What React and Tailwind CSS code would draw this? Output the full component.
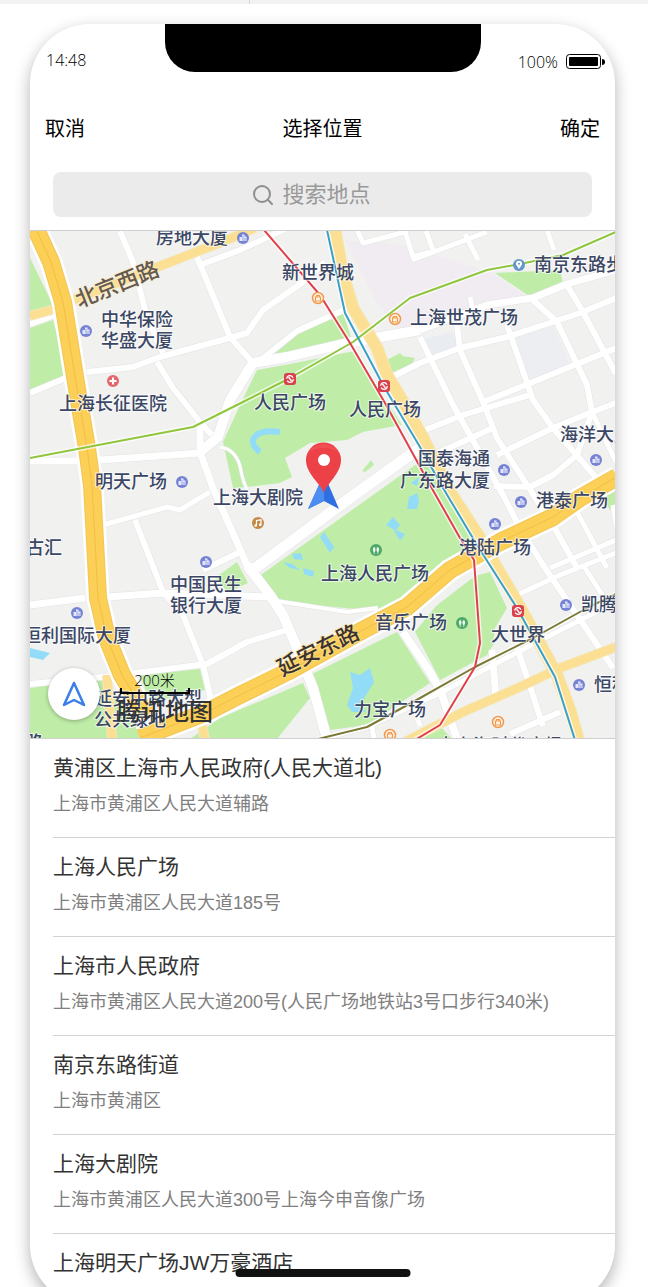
import { Search } from 'lucide-react'

const PLACES = [
  { name: '黄浦区上海市人民政府(人民大道北)', address: '上海市黄浦区人民大道辅路' },
  { name: '上海人民广场', address: '上海市黄浦区人民大道185号' },
  { name: '上海市人民政府', address: '上海市黄浦区人民大道200号(人民广场地铁站3号口步行340米)' },
  { name: '南京东路街道', address: '上海市黄浦区' },
  { name: '上海大剧院', address: '上海市黄浦区人民大道300号上海今申音像广场' },
  { name: '上海明天广场JW万豪酒店', address: '上海市黄浦区南京西路399号' },
]

// Map geometry, viewBox origin is 30,231
const GREENS = [
  '30,258 53,305 30,313',
  '30,328 53,320 58,338 65,378 30,391',
  '273,355 300,332 343,313 352,340',
  '257,370 290,364 354,351 402,425 373,430 363,432 347,440 310,443 285,458 292,477 280,483 247,487 233,488 223,442 240,405',
  '383,362 400,353 403,356 415,358 410,367 393,375',
  '495,273 560,270 563,283 532,298',
  '258,577 425,458 445,490 478,553 400,602 380,612 345,608 280,602',
  '436,606 475,576 490,572 507,608 495,628 493,645 487,655 440,680 415,632',
  '310,675 397,632 430,683 367,725 330,730',
  '220,718 303,683 310,698 277,739 190,739',
  '30,688 103,678 120,700 145,739 30,739',
  '140,675 200,669 205,690 150,702',
  '215,578 237,562 248,583 228,592',
  '602,497 616,490 616,506 610,510',
  '420,739 440,726 452,739',
]

const WATERS = [
  '30,648 50,653 43,660 30,657',
  '350,672 360,675 370,668 374,682 365,697 360,705 366,712 352,712 347,705 353,688',
  '386,525 393,517 400,525 396,530 405,534 400,541 394,530',
  '411,483 419,477 417,486',
  '409,497 417,493 419,501 417,509 407,509',
  '320,537 324,532 334,547 330,553',
  '292,554 301,553 303,560 294,559',
  '283,562 292,564 300,570 290,568',
  '303,568 314,571 313,577 304,574',
]

const STREETS = [
  { w: 6, d: 'M120 231L133 262L147 318L163 353' },
  { w: 6, d: 'M87 372L133 367L160 357L233 337L247 333L263 310L303 282L325 262' },
  { w: 6, d: 'M157 362L173 388L200 422L212 435' },
  { w: 6, d: 'M197 257L230 337L253 363' },
  { w: 6, d: 'M200 265L240 250L285 229' },
  { w: 6, d: 'M30 324L55 315M30 393L66 378' },
  { w: 10, d: 'M253 363L287 357L347 343L420 330' },
  { w: 7, d: 'M420 330L487 305L533 298L567 284L616 270' },
  { w: 6, d: 'M348 308L297 331L257 363' },
  { w: 10, d: 'M253 363L230 400L218 437L200 452' },
  { w: 7, d: 'M30 461L78 461L100 460L200 453' },
  { w: 7, d: 'M200 420L200 452' },
  { w: 7, d: 'M200 452L213 488L250 572' },
  { w: 10, d: 'M247 565L270 595L283 615L297 648L313 688L327 739' },
  { w: 5, d: 'M103 525L167 507L180 510L210 492' },
  { w: 6, d: 'M135 520L163 592L183 615L203 665L211 700' },
  { w: 6, d: 'M203 570L240 552' },
  { w: 11, d: 'M250 572L343 503L400 462L420 448' },
  { w: 6, d: 'M420 432L463 415L530 395' },
  { w: 6, d: 'M390 378L420 363L460 348L507 337L580 313L616 298' },
  { w: 6, d: 'M483 402L533 382L616 348' },
  { w: 6, d: 'M420 337L453 405L470 435L503 495L520 528L543 565L613 668' },
  { w: 6, d: 'M457 325L460 350L483 402L497 438L527 485L553 525L577 568' },
  { w: 6, d: 'M507 325L533 400L553 428L600 482' },
  { w: 6, d: 'M533 300L557 322L587 385L592 412L577 455L553 475L530 487L494 486' },
  { w: 6, d: 'M567 285L583 312L616 374' },
  { w: 6, d: 'M440 452L493 428M497 455L553 428L592 412L616 403' },
  { w: 5, d: 'M592 412L616 462' },
  { w: 5, d: 'M616 540L550 568M517 595L560 575L616 553M577 512L607 568M613 505L617 530M583 565L612 610' },
  { w: 5, d: 'M412 260L420 257L487 232M426 231L433 250M465 234L478 260M547 230L554 250M470 297L473 310' },
  { w: 5, d: 'M357 230L363 243L405 232M405 231L413 257L430 252' },
  { w: 4, d: 'M270 600L347 612L378 608' },
  { w: 3, d: 'M220 447Q235 449 240 466Q243 484 250 495' },
  { w: 8, d: 'M403 632L430 672L441 692L457 739' },
  { w: 6, d: 'M30 684L103 677L207 664L247 642L287 630' },
  { w: 7, d: 'M30 605L85 598M107 597L163 593L270 597' },
  { w: 7, d: 'M492 650L496 698' },
  { w: 6, d: 'M517 647L543 726M510 734L560 712' },
  { w: 5, d: 'M320 739L367 727L440 693L535 643L616 602M372 727L374 739M414 708L420 726' },
]

const AVENUES = [
  { w: 8, d: 'M30 316L55 309L73 300L160 266L227 240L255 228' },
  { w: 11, d: 'M335 230L343 275L353 308L377 348L387 375L405 405L423 438L450 492L480 538L500 573L517 602L537 638L557 675L570 710L579 742' },
  { w: 8, d: 'M616 647L560 668L520 687L463 712L405 742' },
  { w: 8, d: 'M107 675L112 739M200 715L205 739' },
]

const HIGHWAYS = [
  'M35 227L51 262L63 302L78 395L87 448L92 485L96 560L98 598L107 638L122 675L148 718',
  'M140 738L207 712L240 695L287 672L363 630L407 607L450 570L500 542L553 517L580 498L617 477',
]

const METRO = [
  { c: '#8fc63d', d: 'M30 458L193 427L237 405L290 378L353 342L410 298L487 270L520 264L563 255L616 232' },
  { c: '#3aa0c8', d: 'M327 230L345 313L383 385L420 447L443 488L477 545L517 608L555 677L575 740' },
  { c: '#7b7a35', d: 'M318 739L367 727L413 702L475 667L533 638L587 608L616 594' },
  { c: '#e0404a', d: 'M264 230L320 295L350 343L385 403L430 485L460 538L474 560L480 643L475 667L440 725L415 740' },
]

const LABELS = [
  { x: 192, y: 237, t: '房地大厦' },
  { x: 137, y: 319, t: '中华保险' },
  { x: 137, y: 340, t: '华盛大厦' },
  { x: 318, y: 272, t: '新世界城' },
  { x: 579, y: 264, t: '南京东路步' },
  { x: 464, y: 317, t: '上海世茂广场' },
  { x: 113, y: 403, t: '上海长征医院' },
  { x: 290, y: 402, t: '人民广场' },
  { x: 385, y: 409, t: '人民广场' },
  { x: 596, y: 434, t: '海洋大厦' },
  { x: 454, y: 458, t: '国泰海通' },
  { x: 445, y: 480, t: '广东路大厦' },
  { x: 131, y: 481, t: '明天广场' },
  { x: 258, y: 497, t: '上海大剧院' },
  { x: 572, y: 500, t: '港泰广场' },
  { x: 495, y: 547, t: '港陆广场' },
  { x: 44, y: 547, t: '古汇' },
  { x: 206, y: 584, t: '中国民生' },
  { x: 206, y: 605, t: '银行大厦' },
  { x: 375, y: 573, t: '上海人民广场' },
  { x: 411, y: 622, t: '音乐广场' },
  { x: 617, y: 604, t: '凯腾大厦' },
  { x: 518, y: 634, t: '大世界' },
  { x: 77, y: 635, t: '恒利国际大厦' },
  { x: 630, y: 684, t: '恒积大厦' },
  { x: 390, y: 709, t: '力宝广场' },
  { x: 148, y: 698, t: '延安中路大型' },
  { x: 130, y: 719, t: '公共绿地' },
  { x: 500, y: 745, t: '大上海时代广场' },
  { x: 34, y: 742, t: '路' },
]

const BUILDINGS = [[243, 238], [86, 331], [182, 482], [206, 562], [77, 613], [504, 470], [521, 502], [495, 524], [596, 460], [566, 605], [579, 685]]
const SHOPS = [[318, 298], [395, 319], [390, 735], [498, 722]]
const STATIONS = [[290, 379], [384, 386], [518, 611]]
const PARKS = [[376, 550], [462, 623]]

function CityMap() {
  return (
    <svg
      viewBox="30 231 585 507"
      preserveAspectRatio="xMidYMid slice"
      className="block h-full w-full font-['Noto_Sans_CJK_SC',sans-serif]"
      role="img"
      aria-label="地图"
    >
      <rect x="30" y="231" width="586" height="508" fill="#f1f1f0" />
      <polygon points="345,240 400,245 490,272 530,298 400,332 375,300" fill="#f1ecf1" />
      <polygon points="508,340 553,326 570,365 527,382" fill="#eceef1" />
      <polygon points="422,340 452,332 458,346 430,358" fill="#e9edf2" />

      {GREENS.map((p) => <polygon key={p} points={p} fill="#bfeda8" />)}
      <polygon points="362,471 371,460 374,465 365,472" fill="#bfeda8" />
      {WATERS.map((p) => <polygon key={p} points={p} fill="#93dcf8" />)}
      <path d="M280 432Q257 429 253 440Q252 446 260 452" fill="none" stroke="#93dcf8" strokeWidth="6" />

      {/* Roads: casing first, then fill */}
      <g fill="none" strokeLinejoin="round">
        {STREETS.map((s) => <path key={s.d} d={s.d} stroke="#e2e3e4" strokeWidth={s.w + 1} />)}
        {STREETS.map((s) => <path key={s.d} d={s.d} stroke="#ffffff" strokeWidth={s.w} />)}
        {AVENUES.map((s) => <path key={s.d} d={s.d} stroke="#f5e6b8" strokeWidth={s.w + 2} />)}
        {AVENUES.map((s) => <path key={s.d} d={s.d} stroke="#fbdf92" strokeWidth={s.w} />)}
        {HIGHWAYS.map((d) => <path key={d} d={d} stroke="#ffffff" strokeWidth="23" />)}
        {HIGHWAYS.map((d) => <path key={d} d={d} stroke="#f2c658" strokeWidth="18" />)}
        {HIGHWAYS.map((d) => <path key={d} d={d} stroke="#fccf56" strokeWidth="16" />)}
        {HIGHWAYS.map((d) => <path key={d} d={d} stroke="#f2bf45" strokeWidth="1" />)}
        {METRO.map((m) => <path key={m.c} d={m.d} stroke="#ffffff" strokeOpacity="0.7" strokeWidth="5" />)}
        {METRO.map((m) => <path key={m.c} d={m.d} stroke={m.c} strokeWidth="2" />)}
      </g>

      {/* POI icons */}
      {BUILDINGS.map(([x, y]) => (
        <g key={`${x}-${y}`} transform={`translate(${x} ${y})`}>
          <circle r="6" fill="#7683d3" />
          <path d="M-3.500 3V-1H-1V-3.500H1.500V-1.500H3.500V3Z" fill="#e4e8ff" />
          <path d="M0 -2V3M2 0V3" stroke="#7683d3" strokeWidth="0.700" />
        </g>
      ))}
      {SHOPS.map(([x, y]) => (
        <g key={`${x}-${y}`} transform={`translate(${x} ${y})`} fill="none" stroke="#f19a50">
          <circle r="5.500" fill="#fff4e6" strokeWidth="1.500" />
          <path d="M-2.500 -1H2.500V3H-2.500ZM-1.500 -1V-2.500H1.500V-1" strokeWidth="1.200" />
        </g>
      ))}
      {STATIONS.map(([x, y]) => (
        <g key={`${x}-${y}`} transform={`translate(${x} ${y})`}>
          <rect x="-6" y="-6" width="12" height="12" rx="3" fill="#d8414d" />
          <circle r="3.300" fill="none" stroke="#fff" strokeWidth="1.200" strokeDasharray="8.400 2" />
          <path d="M-1.500 -2L1.500 2" stroke="#fff" strokeWidth="1.300" />
        </g>
      ))}
      {PARKS.map(([x, y]) => (
        <g key={`${x}-${y}`} transform={`translate(${x} ${y})`}>
          <circle r="6" fill="#4fa76a" />
          <ellipse cx="-1.800" cy="-0.500" rx="1.300" ry="2.500" fill="#e8f8e8" />
          <ellipse cx="1.800" cy="-0.500" rx="1.300" ry="2.500" fill="#e8f8e8" />
          <path d="M-1.800 0V4M1.800 0V4" stroke="#e8f8e8" strokeWidth="0.800" />
        </g>
      ))}
      <g transform="translate(113 381)">
        <circle r="6" fill="#e4676f" />
        <path d="M-3.500 0H3.500M0 -3.500V3.500" stroke="#fff" strokeWidth="2" />
      </g>
      <g transform="translate(258 523)">
        <circle r="6" fill="#c48a45" />
        <path d="M-1.500 2.500V-2.500L3 -3.200V1.800" fill="none" stroke="#fff" strokeWidth="1.200" />
        <circle cx="-2.300" cy="2.500" r="1.300" fill="#fff" />
        <circle cx="2.200" cy="1.800" r="1.300" fill="#fff" />
      </g>
      <g transform="translate(519 265)">
        <circle r="6" fill="#6598c8" />
        <path d="M0 4C-2 1 -3 0 -3 -1.200A3 3 0 0 1 3 -1.200C3 0 2 1 0 4Z" fill="#fff" />
        <circle cy="-1.200" r="1" fill="#6598c8" />
      </g>

      {/* Place names */}
      <g fontSize="18" fontWeight="500" fill="#3b4765" stroke="#ffffff" strokeOpacity="0.7" strokeWidth="2" strokeLinejoin="round" paintOrder="stroke" textAnchor="middle">
        {LABELS.map((l) => (
          <text key={`${l.x}-${l.y}`} x={l.x} y={l.y + 7}>{l.t}</text>
        ))}
        <text fontSize="22" fill="#65594f" stroke="#fbeecb" transform="translate(117 284) rotate(-22)" y="8">北京西路</text>
        <text fontSize="22" fill="#3c342f" stroke="#fbe2a0" transform="translate(318 650) rotate(-26)" y="8">延安东路</text>
      </g>

      {/* Heading arrow and drop pin */}
      <path d="M324 474L339 509L324 501L308 509Z" fill="#2f6fe0" />
      <path d="M324 474V501L308 509Z" fill="#4c8df2" />
      <path d="M324 493C321 484 306 474 306 460A17.500 17.500 0 0 1 341 460C341 474 326 484 324 493Z" fill="#ec4147" />
      <path d="M309 452A17 17 0 0 1 338 452Q324 444 309 452Z" fill="#f04e53" />
      <circle cx="324" cy="460" r="6" fill="#fff" />
    </svg>
  )
}

function StatusBar() {
  return (
    <div className="flex justify-between pl-4 pr-[10px] pt-6 font-['Open_Sans',sans-serif] text-base font-light leading-6 text-black">
      <span>14:48</span>
      <div className="flex items-center gap-2 pt-[2px]">
        <span>100%</span>
        <svg width="39" height="16" viewBox="0 0 39 16" aria-hidden="true">
          <rect x="0.500" y="0.500" width="34" height="14" rx="3" fill="none" stroke="#000" />
          <rect x="3" y="3" width="29" height="9" rx="1" fill="#000" />
          <path d="M36 5Q39 5 39 8Q39 11 36 11Z" fill="#000" />
        </svg>
      </div>
    </div>
  )
}

export default function App() {
  return (
    <div className="flex h-screen flex-col overflow-hidden bg-white">
      <div className="flex h-1 shrink-0 bg-[#f2f2f2]">
        <div className="w-[250px] border-r border-[#d8d8d8]" />
      </div>

      {/* Phone */}
      <div className="relative mt-5 ml-[30px] mr-[33px] flex h-[calc(100vh-6px)] shrink-0 flex-col overflow-hidden rounded-[60px] bg-white font-['Liberation_Sans','Noto_Sans_CJK_SC',sans-serif] shadow-[0_6px_16px_rgba(0,0,0,0.3)]">
        <div className="absolute top-0 left-1/2 h-12 w-[316px] -translate-x-1/2 rounded-b-[30px] bg-black" />
        <StatusBar />

        <header className="flex items-center justify-between px-[15px] pt-[41px] text-xl leading-7 text-black">
          <button type="button">取消</button>
          <h1>选择位置</h1>
          <button type="button">确定</button>
        </header>

        <div className="px-[23px] pt-[29px] pb-[13px]">
          <label className="flex h-[45px] items-center justify-center gap-2 rounded-lg bg-[#ebebeb]">
            <Search size={24} strokeWidth={2} className="text-[#8e8e8e]" />
            <input
              type="text"
              aria-label="搜索地点"
              placeholder="搜索地点"
              className="w-28 bg-transparent text-[22px] leading-8 text-gray-700 outline-none placeholder:text-[#999999]"
            />
          </label>
        </div>

        <div className="relative h-[509px] shrink-0 overflow-hidden border-y border-[#cfcfcf]">
          <CityMap />
          <button
            type="button"
            aria-label="定位"
            className="absolute bottom-[18px] left-[18px] flex size-[52px] items-center justify-center rounded-full bg-white shadow-[0_1px_4px_rgba(0,0,0,0.3)]"
          >
            <svg width="26" height="28" viewBox="0 0 26 28" fill="none" stroke="#3a7de6" strokeWidth="2.500" strokeLinejoin="round">
              <path d="M13 3L23 25L13 20L3 25Z" />
            </svg>
          </button>
          <div className="absolute bottom-[12px] left-[87px] flex flex-col">
            <span className="w-[75px] text-center font-['Open_Sans','Noto_Sans_CJK_SC',sans-serif] text-[15px] font-light leading-4 text-black">200米</span>
            <div className="ml-[3px] h-[6px] w-[70px] border-x-2 border-b-2 border-black" />
            <span className="font-['Noto_Sans_CJK_SC',sans-serif] text-2xl font-medium leading-8 text-[#333333]">腾讯地图</span>
          </div>
        </div>

        <ul className="min-h-0 flex-1 overflow-hidden pl-[23px]">
          {PLACES.map((place) => (
            <li key={place.name} className="border-b border-[#d2d2d2]">
              <button type="button" className="flex w-full flex-col gap-[10px] pt-[15px] pb-[21px] text-left">
                <span className="text-[21px] leading-7 text-[#333333]">{place.name}</span>
                <span className="text-lg leading-6 text-[#808080]">{place.address}</span>
              </button>
            </li>
          ))}
        </ul>

        {/* Home indicator */}
        <div className="absolute bottom-7 left-1/2 h-2 w-[175px] -translate-x-1/2 rounded-full bg-[#111111]" />
      </div>
    </div>
  )
}
